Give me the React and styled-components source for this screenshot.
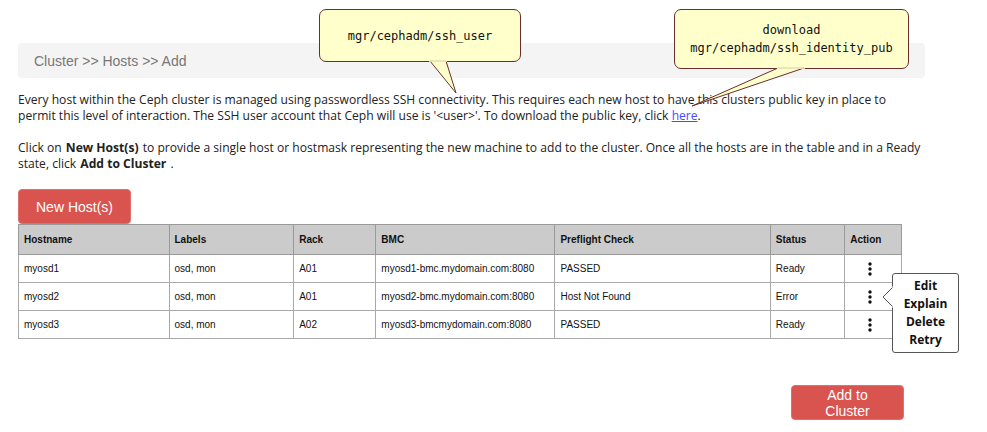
import React from "react";
import styled, { createGlobalStyle } from "styled-components";

const GlobalStyle = createGlobalStyle`
  body {
    margin: 0;
    background: #ffffff;
    font-family: "Open Sans", sans-serif;
  }
`;

const Page = styled.div`
  position: relative;
  width: 987px;
  height: 432px;
  overflow: hidden;
`;

const Content = styled.div`
  width: 907px;
  padding: 43px 0 0 18px;
`;

const Breadcrumb = styled.div`
  height: 35px;
  background: #f4f4f4;
  border-radius: 4px;
  display: flex;
  align-items: center;
  padding-left: 16px;
  font-family: "Liberation Sans", Arial, sans-serif;
  font-size: 14px;
  color: #777777;
`;

const Para = styled.p`
  margin: ${(p) => p.top}px 0 0 0;
  font-size: 12.1px;
  line-height: 16px;
  color: #222222;
`;

const Line = styled.span`
  display: block;
  white-space: nowrap;
`;

const Strong = styled.b`
  font-weight: 700;
  margin: 0 1px;
`;

const Link = styled.a`
  color: #4a4aff;
  text-decoration: underline;
`;

const RedButton = styled.button`
  display: block;
  width: 113px;
  height: ${(p) => p.h}px;
  background: #d9534f;
  border: 1px solid #e0706c;
  border-radius: 4px;
  color: #ffffff;
  font-family: "Liberation Sans", Arial, sans-serif;
  font-size: 14px;
  line-height: 16px;
  padding: 0;
`;

const NewHostButton = styled(RedButton)`
  margin-top: 17px;
`;

const Table = styled.table`
  width: 884px;
  border-collapse: collapse;
  font-family: "Liberation Sans", Arial, sans-serif;
  font-size: 10px;
  color: #111111;
`;

const Th = styled.th`
  height: 29px;
  background: #cbcbcb;
  border: 1px solid #999999;
  text-align: left;
  font-weight: bold;
  padding: 0 0 0 5px;
  width: ${(p) => p.w}px;
`;

const Td = styled.td`
  height: 27px;
  border: 1px solid #a8a8a8;
  padding: ${(p) => (p.center ? "0 6px 0 0" : "0 0 0 5px")};
  text-align: ${(p) => (p.center ? "center" : "left")};
`;

const Kebab = styled.svg`
  display: block;
  margin: 0 auto;
`;

const Footer = styled.div`
  display: flex;
  justify-content: flex-end;
  width: 886px;
  margin-top: 46px;
`;

const Callout = styled.div`
  position: absolute;
  left: ${(p) => p.x}px;
  top: ${(p) => p.y}px;
  width: ${(p) => p.w}px;
  height: ${(p) => p.h}px;
  box-sizing: border-box;
  background: #ffffcc;
  border: 1px solid #6b2e2e;
  border-radius: 7px;
  display: flex;
  flex-direction: column;
  align-items: center;
  justify-content: center;
  font-family: "DejaVu Sans Mono", monospace;
  font-size: 12px;
  line-height: 18px;
  color: #111111;
  z-index: 2;
`;

const Tail = styled.svg`
  position: absolute;
  left: 0;
  top: 0;
  z-index: 3;
  pointer-events: none;
`;

const Menu = styled.div`
  position: absolute;
  left: 892px;
  top: 273px;
  width: 67px;
  height: 80px;
  box-sizing: border-box;
  background: #ffffff;
  border: 1px solid #555555;
  border-radius: 3px;
  display: flex;
  flex-direction: column;
  align-items: center;
  justify-content: center;
  font-size: 12px;
  font-weight: bold;
  line-height: 18px;
  color: #111111;
`;

const MenuArrow = styled.svg`
  position: absolute;
  left: -11px;
  top: 12px;
`;

const columns = [
  ["Hostname", 146],
  ["Labels", 120],
  ["Rack", 77],
  ["BMC", 174],
  ["Preflight Check", 212],
  ["Status", 69],
  ["Action", 51],
];

const hosts = [
  ["myosd1", "osd, mon", "A01", "myosd1-bmc.mydomain.com:8080", "PASSED", "Ready"],
  ["myosd2", "osd, mon", "A01", "myosd2-bmc.mydomain.com:8080", "Host Not Found", "Error"],
  ["myosd3", "osd, mon", "A02", "myosd3-bmcmydomain.com:8080", "PASSED", "Ready"],
];

function Dots() {
  return (
    <Kebab width="6" height="14" viewBox="0 0 6 14">
      <circle cx="3" cy="2" r="1.7" fill="#111" />
      <circle cx="3" cy="7" r="1.7" fill="#111" />
      <circle cx="3" cy="12" r="1.7" fill="#111" />
    </Kebab>
  );
}

export default function App() {
  return (
    <Page>
      <GlobalStyle />
      <Content>
        <Breadcrumb>Cluster &gt;&gt; Hosts &gt;&gt; Add</Breadcrumb>
        <Para top={14}>
          <Line>Every host within the Ceph cluster is managed using passwordless SSH connectivity. This requires each new host to have this clusters public key in place to</Line>
          <Line>permit this level of interaction. The SSH user account that Ceph will use is '&lt;user&gt;'. To download the public key, click <Link href="#"> here</Link>.</Line>
        </Para>
        <Para top={16}>
          <Line>Click on <Strong>New Host(s)</Strong> to provide a single host or hostmask representing the new machine to add to the cluster. Once all the hosts are in the table and in a Ready</Line>
          <Line>state, click <Strong>Add to Cluster</Strong> .</Line>
        </Para>
        <NewHostButton h={35}>New Host(s)</NewHostButton>
        <Table>
          <thead>
            <tr>
              {columns.map(([name, w]) => (
                <Th key={name} w={w}>{name}</Th>
              ))}
            </tr>
          </thead>
          <tbody>
            {hosts.map((row) => (
              <tr key={row[0]}>
                {row.map((cell, i) => (
                  <Td key={i}>{cell}</Td>
                ))}
                <Td center>
                  <Dots />
                </Td>
              </tr>
            ))}
          </tbody>
        </Table>
        <Footer>
          <RedButton h={35}>Add to<br />Cluster</RedButton>
        </Footer>
      </Content>

      <Callout x={319} y={9} w={202} h={53}>mgr/cephadm/ssh_user</Callout>
      <Callout x={674} y={9} w={235} h={60}>
        <span>download</span>
        <span>mgr/cephadm/ssh_identity_pub</span>
      </Callout>
      <Tail width="987" height="432" viewBox="0 0 987 432">
        <polygon points="430,61 456,93 446,61" fill="#ffffcc" stroke="#6b2e2e" strokeWidth="1" />
        <line x1="429" y1="61" x2="447" y2="61" stroke="#ffffcc" strokeWidth="1.5" />
        <polygon points="778,68 692,106 804,68" fill="#ffffcc" stroke="#6b2e2e" strokeWidth="1" />
        <line x1="777" y1="68" x2="805" y2="68" stroke="#ffffcc" strokeWidth="1.5" />
      </Tail>

      <Menu>
        <MenuArrow width="12" height="22" viewBox="0 0 12 22">
          <polygon points="12,0 1,11 12,22" fill="#ffffff" stroke="#555555" strokeWidth="1" />
          <line x1="11.5" y1="0" x2="11.5" y2="22" stroke="#ffffff" strokeWidth="2" />
        </MenuArrow>
        <span>Edit</span>
        <span>Explain</span>
        <span>Delete</span>
        <span>Retry</span>
      </Menu>
    </Page>
  );
}
